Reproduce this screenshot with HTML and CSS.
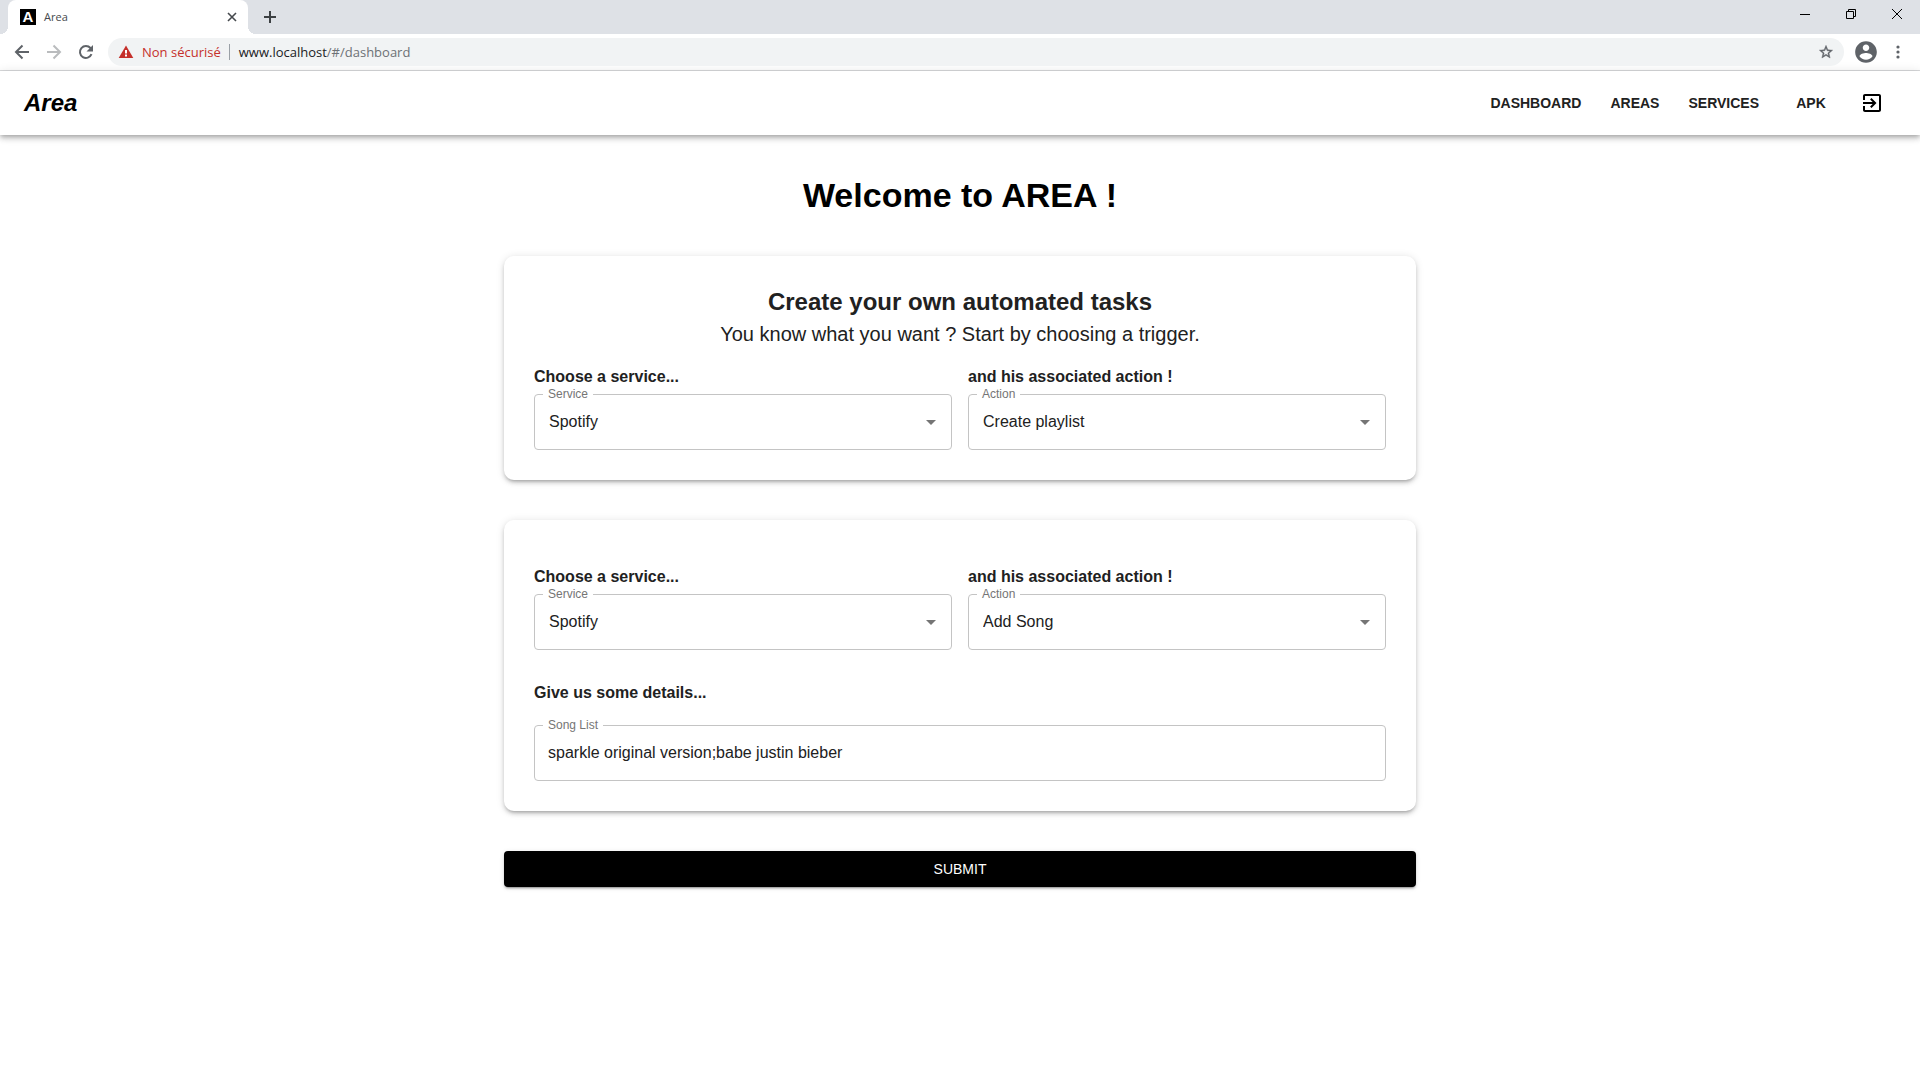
FILE: index.html
```html
<!DOCTYPE html>
<html lang="en">
<head>
<meta charset="utf-8">
<title>Area</title>
<link rel="stylesheet" href="styles.css">
</head>
<body>
<div class="browser">
  <div class="tabstrip">
    <div class="tab">
      <span class="favicon" aria-hidden="true">A</span>
      <span class="tab-title">Area</span>
      <button class="plain tab-close" aria-label="Close tab"><svg width="16" height="16" viewBox="0 0 16 16"><path d="M4 4l8 8M12 4l-8 8" stroke="#45494d" stroke-width="1.600" fill="none"/></svg></button>
    </div>
    <button class="plain new-tab" aria-label="New tab"><svg width="16" height="16" viewBox="0 0 16 16"><path d="M8 2v12M2 8h12" stroke="#3c4043" stroke-width="2" fill="none"/></svg></button>
    <div class="window-controls">
      <button class="plain" aria-label="Minimize"><svg width="10" height="10" viewBox="0 0 10 10"><path d="M0 5.500h10" stroke="#000" fill="none"/></svg></button>
      <button class="plain" aria-label="Restore"><svg width="10" height="10" viewBox="0 0 10 10"><path d="M.5 2.500h7v7h-7zM2.500 2.500v-2h7v7h-2" stroke="#000" fill="none"/></svg></button>
      <button class="plain" aria-label="Close"><svg width="10" height="10" viewBox="0 0 10 10"><path d="M0 0l10 10M10 0L0 10" stroke="#000" fill="none"/></svg></button>
    </div>
  </div>
  <div class="toolbar">
    <div class="history">
      <button class="plain" aria-label="Back"><svg width="16" height="16" viewBox="0 0 16 16"><path d="M15 8H2M8.500 1.500L2 8l6.500 6.500" stroke="#5f6368" stroke-width="2" fill="none"/></svg></button>
      <button class="plain" aria-label="Forward"><svg width="16" height="16" viewBox="0 0 16 16"><path d="M1 8h13M7.500 1.500L14 8l-6.500 6.500" stroke="#babcbe" stroke-width="2" fill="none"/></svg></button>
      <button class="plain" aria-label="Reload"><svg width="16" height="16" viewBox="0 0 16 16"><path d="M13.500 10.200A6 6 0 1 1 12.500 4L13.800 5.500" stroke="#5f6368" stroke-width="2" fill="none"/><path d="M15 1v6.500H8.500z" fill="#5f6368"/></svg></button>
    </div>
    <div class="omnibox">
      <svg width="16" height="16" viewBox="0 0 16 16"><path d="M8 1.500L15.300 14H.7z" fill="#c5302b"/><path d="M7 6h2v3.500H7zM7 10.500h2v2H7z" fill="#fff"/></svg>
      <span class="security">Non sécurisé</span>
      <span class="url">www.localhost<span class="path">/#/dashboard</span></span>
      <button class="plain star" aria-label="Bookmark"><svg width="16" height="16" viewBox="0 0 24 24"><path fill="#5f6368" stroke="#5f6368" stroke-width=".6" d="M22 9.240l-7.190-.62L12 2 9.190 8.630 2 9.240l5.460 4.730L5.820 21 12 17.270 18.180 21l-1.630-7.030L22 9.240zM12 15.400l-3.760 2.270 1-4.280-3.320-2.880 4.380-.38L12 6.100l1.710 4.040 4.380.38-3.320 2.880 1 4.280L12 15.400z"/></svg></button>
    </div>
    <button class="plain" aria-label="Profile"><svg width="26" height="26" viewBox="0 0 24 24"><path fill="#5f6368" d="M12 2C6.480 2 2 6.480 2 12s4.480 10 10 10 10-4.480 10-10S17.520 2 12 2zm0 3c1.660 0 3 1.340 3 3s-1.340 3-3 3-3-1.340-3-3 1.340-3 3-3zm0 14.200c-2.500 0-4.710-1.280-6-3.220.03-1.990 4-3.080 6-3.080 1.990 0 5.970 1.090 6 3.080-1.290 1.940-3.500 3.220-6 3.220z"/></svg></button>
    <button class="plain menu" aria-label="Menu"><svg width="4" height="16" viewBox="0 0 4 16"><g fill="#5f6368"><circle cx="2" cy="3" r="1.600"/><circle cx="2" cy="8" r="1.600"/><circle cx="2" cy="13" r="1.600"/></g></svg></button>
  </div>
</div>

<header class="appbar">
  <a class="brand" href="#/">Area</a>
  <nav class="nav">
    <a href="#/dashboard">DASHBOARD</a>
    <a href="#/areas">AREAS</a>
    <a href="#/services">SERVICES</a>
    <a href="#/apk">APK</a>
  </nav>
  <button class="plain logout" aria-label="Log out"><svg width="24" height="24" viewBox="0 0 24 24"><path d="M10.090 15.590L11.500 17l5-5-5-5-1.410 1.410L12.670 11H3v2h9.670l-2.580 2.590zM19 3H5c-1.110 0-2 .9-2 2v4h2V5h14v14H5v-4H3v4c0 1.100.89 2 2 2h14c1.100 0 2-.9 2-2V5c0-1.100-.9-2-2-2z"/></svg></button>
</header>

<main class="page">
  <h1 class="title">Welcome to AREA !</h1>
  <form class="form">
    <section class="card">
      <h2 class="card-title">Create your own automated tasks</h2>
      <p class="card-lead">You know what you want ? Start by choosing a trigger.</p>
      <div class="pair">
        <div>
          <h3 class="caption">Choose a service...</h3>
          <div class="field">
            <label for="trigger-service">Service</label>
            <select id="trigger-service"><option>Spotify</option></select>
            <svg class="arrow" width="24" height="24" viewBox="0 0 24 24"><path d="M7 10l5 5 5-5z"/></svg>
          </div>
        </div>
        <div>
          <h3 class="caption">and his associated action !</h3>
          <div class="field">
            <label for="trigger-action">Action</label>
            <select id="trigger-action"><option>Create playlist</option></select>
            <svg class="arrow" width="24" height="24" viewBox="0 0 24 24"><path d="M7 10l5 5 5-5z"/></svg>
          </div>
        </div>
      </div>
    </section>
    <section class="card">
      <div class="pair">
        <div>
          <h3 class="caption">Choose a service...</h3>
          <div class="field">
            <label for="reaction-service">Service</label>
            <select id="reaction-service"><option>Spotify</option></select>
            <svg class="arrow" width="24" height="24" viewBox="0 0 24 24"><path d="M7 10l5 5 5-5z"/></svg>
          </div>
        </div>
        <div>
          <h3 class="caption">and his associated action !</h3>
          <div class="field">
            <label for="reaction-action">Action</label>
            <select id="reaction-action"><option>Add Song</option></select>
            <svg class="arrow" width="24" height="24" viewBox="0 0 24 24"><path d="M7 10l5 5 5-5z"/></svg>
          </div>
        </div>
      </div>
      <div class="details">
        <h3 class="caption">Give us some details...</h3>
        <div class="field">
          <label for="songs">Song List</label>
          <input id="songs" type="text" value="sparkle original version;babe justin bieber">
        </div>
      </div>
    </section>
    <button class="submit" type="submit">SUBMIT</button>
  </form>
</main>
</body>
</html>
```
FILE: styles.css
```css
* {
  box-sizing: border-box;
}

body {
  margin: 0;
  background: #fff;
  color: #212121;
  font-family: "Liberation Sans", Arial, sans-serif;
  font-size: 16px;
  line-height: 24px;
}

h1, h2, h3, p {
  margin: 0;
}

svg {
  display: block;
}

.plain {
  display: flex;
  align-items: center;
  justify-content: center;
  padding: 0;
  border: 0;
  background: none;
}

/* Browser frame */
.browser {
  border-bottom: 1px solid #d9dadc;
  font-family: "Open Sans", sans-serif;
  font-size: 13px;
}

.tabstrip {
  display: flex;
  height: 34px;
  padding-left: 8px;
  background: #dee1e6;
}

.tab {
  position: relative;
  display: flex;
  align-items: center;
  gap: 8px;
  width: 240px;
  padding: 0 8px 0 12px;
  border-radius: 8px 8px 0 0;
  background: #fff;
}

.tab::before,
.tab::after {
  content: "";
  position: absolute;
  bottom: 0;
  width: 8px;
  height: 8px;
}

.tab::before {
  left: -8px;
  background: radial-gradient(circle at 0 0, #dee1e6 8px, #fff 8px);
}

.tab::after {
  right: -8px;
  background: radial-gradient(circle at 100% 0, #dee1e6 8px, #fff 8px);
}

.favicon {
  width: 16px;
  height: 16px;
  background: #000;
  color: #fff;
  font-family: "Liberation Sans", Arial, sans-serif;
  font-size: 15px;
  font-weight: 700;
  line-height: 16px;
  text-align: center;
}

.tab-title {
  flex: 1;
  color: #45494d;
  font-size: 11px;
}

.new-tab {
  margin-left: 14px;
}

.new-tab,
.tab-close {
  height: 34px;
}

.window-controls {
  display: flex;
  margin-left: auto;
}

.window-controls button {
  width: 46px;
  height: 28px;
}

.toolbar {
  display: flex;
  align-items: center;
  height: 36px;
  padding: 0 20px 0 14px;
}

.history {
  display: flex;
  gap: 16px;
  margin-right: 14px;
}

.omnibox {
  display: flex;
  flex: 1;
  align-items: center;
  height: 28px;
  margin-right: 9px;
  padding: 0 10px;
  border-radius: 14px;
  background: #f1f3f4;
}

.security {
  margin: 0 8px;
  color: #c5302b;
}

.url {
  display: flex;
  align-items: center;
  color: #202124;
}

.url::before {
  content: "";
  width: 1px;
  height: 16px;
  margin-right: 9px;
  background: #9aa0a6;
}

.path {
  color: #6d7175;
}

.star {
  margin-left: auto;
}

.menu {
  margin-left: 17px;
}

/* Application bar */
.appbar {
  display: flex;
  align-items: center;
  height: 64px;
  padding: 0 24px;
  box-shadow: 0 2px 4px -1px rgba(0, 0, 0, .2), 0 4px 5px rgba(0, 0, 0, .14), 0 1px 10px rgba(0, 0, 0, .12);
}

.brand {
  margin-right: auto;
  color: #000;
  font-size: 24px;
  font-style: italic;
  font-weight: 700;
  text-decoration: none;
}

.nav {
  display: flex;
  gap: 11px;
  margin-right: 5px;
}

.nav a {
  min-width: 64px;
  padding: 6px 9px;
  color: #212121;
  font-size: 14px;
  font-weight: 700;
  text-align: center;
  text-decoration: none;
}

.logout {
  padding: 12px;
}

/* Dashboard */
.page {
  max-width: 960px;
  margin: 0 auto;
  padding: 40px 24px;
}

.title {
  margin-bottom: 40px;
  color: #000;
  font-size: 34px;
  line-height: 41px;
  text-align: center;
}

.form {
  display: flex;
  flex-direction: column;
  gap: 40px;
}

.card {
  padding: 30px;
  border-radius: 10px;
  box-shadow: 0 3px 3px -2px rgba(0, 0, 0, .2), 0 3px 4px rgba(0, 0, 0, .14), 0 1px 8px rgba(0, 0, 0, .12);
}

.card-title {
  font-size: 24px;
  line-height: 32px;
  text-align: center;
}

.card-lead {
  font-size: 20px;
  line-height: 32px;
  text-align: center;
}

.pair {
  display: grid;
  grid-template-columns: 1fr 1fr;
  gap: 16px;
  margin-top: 15px;
}

.caption {
  margin-bottom: 5px;
  font-size: 16px;
}

.details {
  margin-top: 31px;
}

.details .caption {
  margin-bottom: 20px;
}

.field {
  position: relative;
}

.field label {
  position: absolute;
  top: -8px;
  left: 9px;
  padding: 0 5px;
  background: #fff;
  color: #757575;
  font-size: 12px;
  line-height: 16px;
}

.field select,
.field input {
  display: block;
  width: 100%;
  height: 56px;
  padding: 0 13px;
  border: 1px solid #c4c4c4;
  border-radius: 4px;
  appearance: none;
  background: transparent;
  color: #212121;
  font: inherit;
}

.field select {
  padding: 0 14px;
}

.arrow {
  position: absolute;
  top: 16px;
  right: 9px;
  fill: #757575;
  pointer-events: none;
}

.submit {
  height: 36px;
  border: 0;
  border-radius: 4px;
  background: #000;
  box-shadow: 0 3px 1px -2px rgba(0, 0, 0, .2), 0 2px 2px rgba(0, 0, 0, .14), 0 1px 5px rgba(0, 0, 0, .12);
  color: #fff;
  font-family: inherit;
  font-size: 14px;
}
```
